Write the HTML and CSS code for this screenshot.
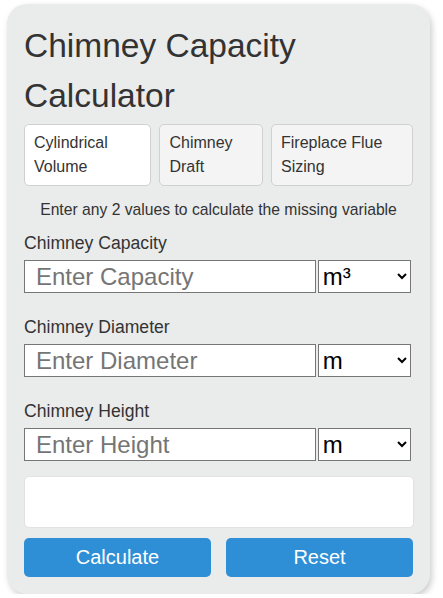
FILE: index.html
```html
<!DOCTYPE html>
<html lang="en">
<head>
    <meta charset="UTF-8">
    <meta name="viewport" content="width=device-width, initial-scale=1.0">
    <title>Chimney Capacity Calculator</title>
    <link rel="stylesheet" href="styles.css">
</head>
<body>
    <div class="calculator">
        <h1>Chimney Capacity Calculator</h1>

        <div class="tabs">
            <div class="tab active">Cylindrical Volume</div>
            <div class="tab">Chimney Draft</div>
            <div class="tab">Fireplace Flue Sizing</div>
        </div>

        <p class="hint">Enter any 2 values to calculate the missing variable</p>

        <div class="field">
            <label for="capacity">Chimney Capacity</label>
            <div class="input-row">
                <input type="text" id="capacity" placeholder="Enter Capacity">
                <select>
                    <option>m³</option>
                    <option>ft³</option>
                </select>
            </div>
        </div>

        <div class="field">
            <label for="diameter">Chimney Diameter</label>
            <div class="input-row">
                <input type="text" id="diameter" placeholder="Enter Diameter">
                <select>
                    <option>m</option>
                    <option>ft</option>
                </select>
            </div>
        </div>

        <div class="field">
            <label for="height">Chimney Height</label>
            <div class="input-row">
                <input type="text" id="height" placeholder="Enter Height">
                <select>
                    <option>m</option>
                    <option>ft</option>
                </select>
            </div>
        </div>

        <div class="result"></div>

        <div class="buttons">
            <button class="btn">Calculate</button>
            <button class="btn">Reset</button>
        </div>
    </div>
</body>
</html>
```

FILE: styles.css
```css
* {
    margin: 0;
    padding: 0;
    box-sizing: border-box;
}

body {
    font-family: 'Liberation Sans', Arial, sans-serif;
    background: #fff;
    color: #333;
}

.calculator {
    width: 423px;
    margin: 4px 0 0 7px;
    background: #eaebeb;
    border-radius: 20px;
    box-shadow: 2px 3px 6px rgba(0, 0, 0, 0.2);
    padding: 17px;
}

h1 {
    font-size: 33.5px;
    line-height: 50px;
    font-weight: normal;
    color: #333;
}

.tabs {
    display: flex;
    gap: 8px;
    margin-top: 3px;
}

.tab {
    background: #f4f4f4;
    border: 1px solid #d0d0d0;
    border-radius: 5px;
    padding: 6px 9px;
    font-size: 16px;
    line-height: 24px;
    color: #333;
}

.tab.active {
    background: #fff;
}

.hint {
    text-align: center;
    font-size: 15.7px;
    line-height: 20px;
    margin-top: 14px;
    color: #333;
}

.field {
    margin-top: 12px;
}

.field + .field {
    margin-top: 23px;
}

.field label {
    display: block;
    font-size: 17.6px;
    line-height: 22px;
    margin-bottom: 6px;
    color: #333;
}

.input-row {
    display: flex;
    gap: 2px;
}

.input-row input {
    width: 75%;
    height: 33px;
    border: 1px solid #767676;
    background: #fff;
    font-family: inherit;
    font-size: 24px;
    padding: 0 11px;
    color: #000;
}

.input-row input::placeholder {
    color: #757575;
}

.input-row select {
    width: 24%;
    height: 33px;
    border: 1px solid #767676;
    border-radius: 0;
    background: #fff;
    font-family: inherit;
    font-size: 24px;
    padding: 0;
    color: #000;
}

.result {
    background: #fff;
    border: 1px solid #e2e2e2;
    border-radius: 5px;
    height: 52px;
    margin-top: 15px;
    margin-right: -1px;
}

.buttons {
    display: flex;
    gap: 15px;
    margin-top: 10px;
}

.btn {
    flex: 1;
    height: 39px;
    background: #2e8fd6;
    color: #fff;
    border: none;
    border-radius: 5px;
    font-family: inherit;
    font-size: 20px;
}
```
